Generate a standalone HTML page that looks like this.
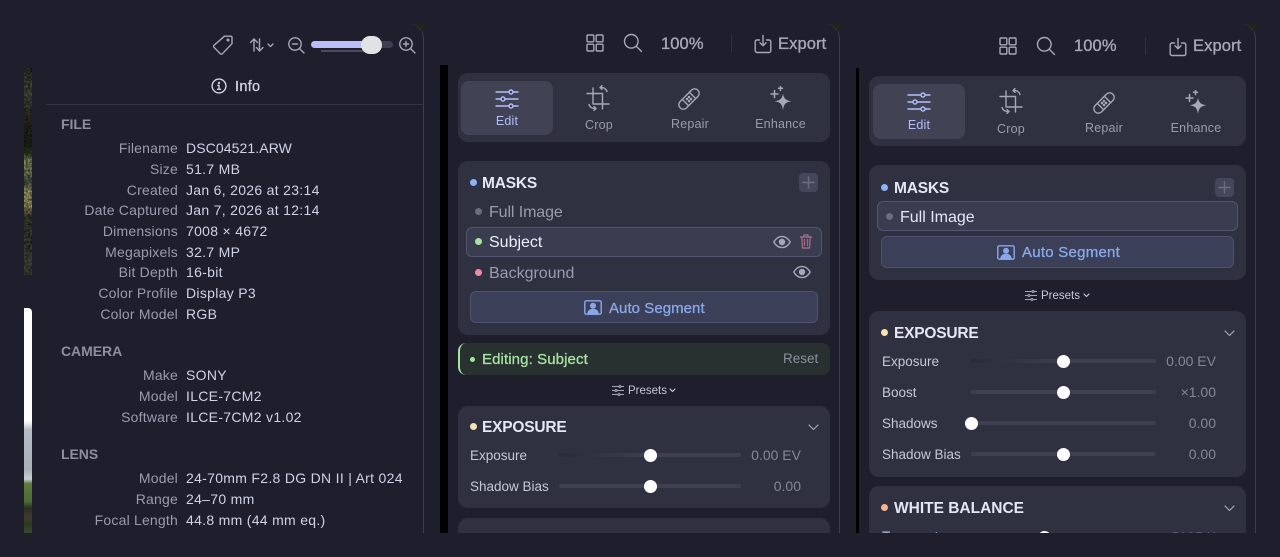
<!DOCTYPE html>
<html><head><meta charset="utf-8">
<style>
html,body{margin:0;padding:0;background:#1e1e2d;width:1280px;height:557px;overflow:hidden}
body{position:relative;font-family:"Liberation Sans",sans-serif;color:#cdd6f4}
div,span,svg{position:absolute}
.clip{left:0;top:0;width:1280px;height:533px;overflow:hidden}
.t{white-space:nowrap;line-height:20px}
.l{width:170px;left:8px;text-align:right;font-size:14px;color:#9a9cad;letter-spacing:.2px}
.v{left:186px;font-size:14px;color:#cfd3e6;letter-spacing:.3px}
.h{left:61px;font-size:14px;font-weight:bold;color:#8d8e9f;letter-spacing:-.05px}
.p{background:#2f3040;border-radius:10px}
.hd{font-size:15.5px;font-weight:bold;letter-spacing:-.2px;color:#e4e7f4}
.dot{border-radius:50%}
.tr{height:4px;background:#3e3f50;border-radius:2px}
.th{width:13px;height:13px;background:#fff;border-radius:50%}
.sl{font-size:13.5px;color:#c4c8da}
.sv{font-size:14px;color:#85869a;text-align:right;width:90px}
.tab{font-size:12.5px;color:#9a9cad;text-align:center;letter-spacing:.2px}
.top{font-size:16.5px;color:#a6a8b8;letter-spacing:.1px;-webkit-text-stroke:.35px #a6a8b8}
svg{fill:none;stroke:#a6a8b8;stroke-width:1.4;stroke-linecap:round;stroke-linejoin:round}
</style></head><body>
<div class="clip">

<!-- window edges -->
<div style="left:410px;top:24px;width:14px;height:14px;background:#23241a"></div>
<div style="left:826px;top:24px;width:14px;height:14px;background:#23241a"></div>
<div style="left:1240px;top:24px;width:16px;height:16px;background:#23241a"></div>
<div style="left:0;top:24px;width:423px;height:520px;background:#1e1e2d;border-right:1px solid #3c3d4d;border-top-right-radius:15px;box-sizing:content-box"></div>
<div style="left:424px;top:24px;width:415px;height:520px;background:#1e1e2d;border-right:1px solid #3c3d4d;border-top-right-radius:15px"></div>
<div style="left:840px;top:24px;width:415px;height:520px;background:#1e1e2d;border-right:1px solid #3c3d4d;border-top-right-radius:15px"></div>

<!-- photo strips -->
<div style="left:24px;top:68px;width:8px;height:207px;background:linear-gradient(180deg,#2b3022 0,#4a5040 12%,#2c2a24 25%,#1c1f18 36%,#2b3a22 41%,#8b9060 45%,#80885c 50%,#4d5c48 54%,#5d6648 56%,#a9a66f 60%,#95935f 67%,#3a3e32 72%,#383d32 85%,#464c3c 95%,#3a3e32 100%)"></div>
<div style="left:24px;top:308px;width:8px;height:225px;border-top-right-radius:4px;background:linear-gradient(180deg,#fff 0,#fff 50%,#dfe2e6 52%,#b4bcc4 54%,#a9b2b8 72%,#c9d0d2 76%,#5f7c3e 78%,#4c6a32 86%,#2c2e24 89%,#403a30 93%,#2a3a20 96%,#374a2c 100%)"></div>
<svg style="left:24px;top:68px;stroke:none" width="8" height="207"><defs><filter id="n" x="0" y="0" width="100%" height="100%"><feTurbulence type="fractalNoise" baseFrequency=".45" numOctaves="2" seed="4"/><feColorMatrix values="0 0 0 0 0 0 0 0 0 0 0 0 0 0 0 1.300 0 0 0 -.35"/></filter></defs><rect width="8" height="207" fill="#000" filter="url(#n)"/></svg>

<!-- black bars -->
<div style="left:440px;top:65px;width:8px;height:470px;background:#000"></div>
<div style="left:856px;top:68px;width:3px;height:470px;background:#000"></div>

<!-- ===== WINDOW 1 ===== -->
<svg style="left:211px;top:33px" width="24" height="24" viewBox="0 0 24 24"><path d="M13.5 3.2h6.3a1.2 1.2 0 0 1 1.2 1.2v6.3L11.3 20.8a1.4 1.4 0 0 1-2 0L3 14.3a1.4 1.4 0 0 1 0-2z"/><circle cx="17" cy="7" r=".8" fill="#a6a8b8"/></svg>
<svg style="left:249px;top:37px" width="26" height="16" viewBox="0 0 26 16"><path d="M5 14V2M1.5 5.5 5 2l3.5 3.5M10.500 2v12M7.500 10.500 10.500 14l3.500-3.500"/><path d="M19 7l2.500 2.500L24 7" stroke-width="1.300"/></svg>
<svg style="left:287px;top:36px" width="18" height="18" viewBox="0 0 18 18"><circle cx="8" cy="8" r="6.200"/><path d="M5.500 8h5M12.500 12.500 17 17"/></svg>
<div style="left:311px;top:41px;width:82px;height:7px;background:#3d3e4f;border-radius:4px"></div>
<div style="left:311px;top:41px;width:56px;height:7px;background:#b9bdfa;border-radius:4px"></div>
<div style="left:321px;top:50px;width:55px;height:2px;background:#4a4b5b"></div>
<div style="left:361px;top:36px;width:21px;height:18px;background:#e2e2e6;border-radius:9px"></div>
<svg style="left:398px;top:36px" width="18" height="18" viewBox="0 0 18 18"><circle cx="8" cy="8" r="6.200"/><path d="M5.500 8h5M8 5.500v5M12.500 12.500 17 17"/></svg>

<svg style="left:211px;top:78px;stroke:#d0d3e4" width="16" height="16" viewBox="0 0 16 16"><circle cx="8" cy="8" r="6.900"/><path d="M6.700 7.300H8v4M6.500 11.300h3"/><circle cx="8" cy="4.900" r=".5" fill="#d0d3e4"/></svg>
<div class="t" style="left:235px;top:76.500px;font-size:14.500px;color:#cfd3e6;-webkit-text-stroke:.3px #cfd3e6;letter-spacing:.3px">Info</div>
<div style="left:46px;top:104px;width:377px;height:1px;background:#333445"></div>

<div class="t h" style="top:114px">FILE</div>
<div class="t l" style="top:138px">Filename</div><div class="t v" style="top:138px;letter-spacing:.1px">DSC04521.ARW</div>
<div class="t l" style="top:159px">Size</div><div class="t v" style="top:159px">51.7 MB</div>
<div class="t l" style="top:180px">Created</div><div class="t v" style="top:180px">Jan 6, 2026 at 23:14</div>
<div class="t l" style="top:200px">Date Captured</div><div class="t v" style="top:200px">Jan 7, 2026 at 12:14</div>
<div class="t l" style="top:221px">Dimensions</div><div class="t v" style="top:221px">7008 × 4672</div>
<div class="t l" style="top:242px">Megapixels</div><div class="t v" style="top:242px">32.7 MP</div>
<div class="t l" style="top:262px">Bit Depth</div><div class="t v" style="top:262px">16-bit</div>
<div class="t l" style="top:283px">Color Profile</div><div class="t v" style="top:283px">Display P3</div>
<div class="t l" style="top:304px">Color Model</div><div class="t v" style="top:304px">RGB</div>
<div class="t h" style="top:341px">CAMERA</div>
<div class="t l" style="top:365px">Make</div><div class="t v" style="top:365px">SONY</div>
<div class="t l" style="top:386px">Model</div><div class="t v" style="top:386px">ILCE-7CM2</div>
<div class="t l" style="top:407px">Software</div><div class="t v" style="top:407px">ILCE-7CM2 v1.02</div>
<div class="t h" style="top:444px">LENS</div>
<div class="t l" style="top:468px">Model</div><div class="t v" style="top:468px">24-70mm F2.8 DG DN II | Art 024</div>
<div class="t l" style="top:489px">Range</div><div class="t v" style="top:489px">24–70 mm</div>
<div class="t l" style="top:510px">Focal Length</div><div class="t v" style="top:510px">44.8 mm (44 mm eq.)</div>

<!-- ===== WINDOW 2 ===== -->
<svg style="left:586px;top:34px" width="18" height="18" viewBox="0 0 18 18"><rect x="1" y="1" width="6.800" height="6.800" rx="1"/><rect x="10.200" y="1" width="6.800" height="6.800" rx="1"/><rect x="1" y="10.200" width="6.800" height="6.800" rx="1"/><rect x="10.200" y="10.200" width="6.800" height="6.800" rx="1"/></svg>
<svg style="left:623px;top:33px" width="20" height="20" viewBox="0 0 20 20"><circle cx="8.300" cy="8.300" r="6.800"/><path d="M13.300 13.300 18.500 18.500"/></svg>
<div class="t top" style="left:661px;top:33.500px">100%</div>
<div style="left:731px;top:34px;width:1px;height:18px;background:#2f3040"></div>
<svg style="left:754px;top:34px" width="18" height="20" viewBox="0 0 18 20"><path d="M5.500 6H3a1.800 1.800 0 0 0-1.800 1.800v9A1.800 1.800 0 0 0 3 18.500h12a1.800 1.800 0 0 0 1.800-1.800v-9A1.800 1.800 0 0 0 15 6h-2.500M9 1.500v10M6 8.800l3 3 3-3"/></svg>
<div class="t top" style="left:778px;top:33.500px">Export</div>

<div class="p" style="left:458px;top:73px;width:372px;height:69px"></div>
<div style="left:461px;top:81px;width:92px;height:54px;background:#414253;border-radius:8px"></div>
<svg style="left:495px;top:89px;stroke:#b4befe" width="24" height="20" viewBox="0 0 24 20"><path d="M1 3h13M18 3h5M1 10h5M10 10h13M1 17h13M18 17h5"/><circle cx="16" cy="3" r="2"/><circle cx="8" cy="10" r="2"/><circle cx="16" cy="17" r="2"/></svg>
<div class="t tab" style="left:461px;top:111px;width:92px;color:#b4befe">Edit</div>
<svg style="left:586px;top:85px" width="24" height="27" viewBox="0 0 24 27"><path d="M1 8.500h15.500V24M7 3v16h16"/><path d="M14 2.500c3-.5 6 1 7 4M14 2.500l2-1.800M14 2.500l2 1.800M10 23.500c-3 .5-6-1-7-4M10 23.500l-2 1.800M10 23.500l-2-1.800"/></svg>
<div class="t tab" style="left:553px;top:115px;width:92px">Crop</div>
<svg style="left:677px;top:87px" width="24" height="24" viewBox="0 0 24 24"><g transform="rotate(-45 12 12)"><rect x="-.5" y="7.500" width="25" height="9" rx="4.500"/><path d="M7 7.500v9M17 7.500v9"/></g><circle cx="12" cy="10" r=".6" fill="#a6a8b8"/><circle cx="14" cy="12" r=".6" fill="#a6a8b8"/><circle cx="10" cy="12" r=".6" fill="#a6a8b8"/><circle cx="12" cy="14" r=".6" fill="#a6a8b8"/></svg>
<div class="t tab" style="left:644px;top:114px;width:92px">Repair</div>
<svg style="left:769px;top:86px;stroke:none" width="24" height="26" viewBox="0 0 24 26"><path d="M14 7.500c.8 5 2.500 6.800 8.500 7.800-6 1-7.700 2.800-8.500 9-.8-6.200-2.500-8-8.500-9 6-1 7.700-2.800 8.500-7.800z" fill="#a6a8b8"/><path d="M5.500 4.500v7M2 8h7M11.500 0v4.500M9.500 2.200h4" stroke="#a6a8b8" stroke-width="1.500"/></svg>
<div class="t tab" style="left:735px;top:114px;width:91px">Enhance</div>

<div class="p" style="left:458px;top:161px;width:372px;height:174px"></div>
<div class="dot" style="left:470px;top:179px;width:7px;height:7px;background:#89b4fa"></div>
<div class="t hd" style="left:482px;top:174px">MASKS</div>
<div style="left:799px;top:173px;width:19px;height:19px;background:#45465a;border-radius:4px"></div>
<svg style="left:802px;top:176px;stroke:#6b6d80" width="13" height="13" viewBox="0 0 13 13"><path d="M6.500 1v11M1 6.500h11"/></svg>
<div class="dot" style="left:475px;top:208px;width:7px;height:7px;background:#6c6e80"></div>
<div class="t" style="left:489px;top:203px;font-size:16px;color:#9a9cad;letter-spacing:-.1px">Full Image</div>
<div style="left:466px;top:227px;width:356px;height:30px;box-sizing:border-box;background:#3a3c50;border:1px solid #525672;border-radius:6px"></div>
<div class="dot" style="left:475px;top:238px;width:7px;height:7px;background:#a6e3a1"></div>
<div class="t" style="left:489px;top:233px;font-size:16px;color:#eef0fa">Subject</div>
<svg style="left:773px;top:235px;stroke:#a6a8b8" width="18" height="14" viewBox="0 0 18 14"><path d="M.8 7C3 3.200 5.800 1.400 9 1.400s6 1.800 8.200 5.600C15 10.800 12.200 12.600 9 12.600S3 10.800.8 7z"/><circle cx="9" cy="7" r="2.500" fill="#a6a8b8"/></svg>
<svg style="left:800px;top:234px;stroke:#9c6a80" width="12" height="15" viewBox="0 0 12 15"><path d="M.5 3h11M4 3V1h4v2M1.800 3l.7 11h7l.7-11M4.500 5.500v6M7.500 5.500v6"/></svg>
<div class="dot" style="left:475px;top:269px;width:7px;height:7px;background:#eb8ba5"></div>
<div class="t" style="left:489px;top:264px;font-size:16px;color:#9a9cad">Background</div>
<svg style="left:793px;top:265px;stroke:#a6a8b8" width="18" height="14" viewBox="0 0 18 14"><path d="M.8 7C3 3.200 5.800 1.400 9 1.400s6 1.800 8.200 5.600C15 10.800 12.200 12.600 9 12.600S3 10.800.8 7z"/><circle cx="9" cy="7" r="2.500" fill="#a6a8b8"/></svg>
<div style="left:470px;top:291px;width:348px;height:32px;box-sizing:border-box;background:#3b3f57;border:1px solid #4d5272;border-radius:6px"></div>
<svg style="left:584px;top:300px;stroke:#89a8ea" width="18" height="15" viewBox="0 0 18 15"><rect x=".8" y=".8" width="16.400" height="13.400" rx="1.500"/><circle cx="9" cy="5.800" r="2.300" fill="#89a8ea"/><path d="M3.800 14c.4-3.500 2.600-4.500 5.200-4.500s4.800 1 5.200 4.500z" fill="#89a8ea"/></svg>
<div class="t" style="left:609px;top:298.500px;font-size:15px;color:#89a8ea;-webkit-text-stroke:.3px #89a8ea;letter-spacing:.05px">Auto Segment</div>

<div style="left:458px;top:343px;width:372px;height:32px;box-sizing:border-box;background:#293030;border-left:2px solid #a6e3a1;border-radius:8px"></div>
<div class="dot" style="left:470px;top:357px;width:5px;height:5px;background:#a6e3a1"></div>
<div class="t" style="left:482px;top:349.500px;font-size:15px;color:#a6e3a1;-webkit-text-stroke:.3px #a6e3a1;letter-spacing:.1px">Editing: Subject</div>
<div class="t" style="left:783px;top:349px;font-size:13.500px;color:#8d8e9f">Reset</div>

<svg style="left:612px;top:385px;stroke:#a6a8b8;stroke-width:1" width="12" height="11" viewBox="0 0 12 11"><path d="M0 1.500h12M0 5.500h12M0 9.500h12"/><circle cx="8" cy="1.500" r="1" fill="#1e1e2d"/><circle cx="4" cy="5.500" r="1" fill="#1e1e2d"/><circle cx="7" cy="9.500" r="1" fill="#1e1e2d"/></svg>
<div class="t" style="left:628px;top:381px;font-size:11.500px;color:#c4c8da">Presets</div>
<svg style="left:669px;top:388px;stroke:#c4c8da;stroke-width:1.200" width="7" height="5" viewBox="0 0 7 5"><path d="M1 1l2.500 2.500L6 1"/></svg>

<div class="p" style="left:458px;top:406px;width:372px;height:102px"></div>
<div class="dot" style="left:470px;top:423px;width:7px;height:7px;background:#f9e2af"></div>
<div class="t hd" style="left:482px;top:418px">EXPOSURE</div>
<svg style="left:808px;top:424px;stroke:#a6a8b8;stroke-width:1.200" width="11" height="7" viewBox="0 0 11 7"><path d="M1 1l4.500 4.500L10 1"/></svg>
<div class="t sl" style="left:470px;top:446px">Exposure</div>
<div class="tr" style="left:559px;top:453px;width:182px;background:linear-gradient(90deg,#2a2b38,#3e3f50 50%)"></div>
<div class="th" style="left:644px;top:449px"></div>
<div class="t sv" style="left:711px;top:445px">0.00 EV</div>
<div class="t sl" style="left:470px;top:477px">Shadow Bias</div>
<div class="tr" style="left:559px;top:484px;width:182px"></div>
<div class="th" style="left:644px;top:480px"></div>
<div class="t sv" style="left:711px;top:476px">0.00</div>
<div class="p" style="left:458px;top:518px;width:372px;height:40px"></div>
<div class="t hd" style="left:482px;top:530px;color:#8d8e9f">WHITE BALANCE</div>

<!-- ===== WINDOW 3 ===== -->
<svg style="left:999px;top:37px" width="18" height="18" viewBox="0 0 18 18"><rect x="1" y="1" width="6.800" height="6.800" rx="1"/><rect x="10.200" y="1" width="6.800" height="6.800" rx="1"/><rect x="1" y="10.200" width="6.800" height="6.800" rx="1"/><rect x="10.200" y="10.200" width="6.800" height="6.800" rx="1"/></svg>
<svg style="left:1036px;top:36px" width="20" height="20" viewBox="0 0 20 20"><circle cx="8.300" cy="8.300" r="6.800"/><path d="M13.300 13.300 18.500 18.500"/></svg>
<div class="t top" style="left:1074px;top:36px">100%</div>
<div style="left:1145px;top:37px;width:1px;height:18px;background:#2f3040"></div>
<svg style="left:1169px;top:37px" width="18" height="20" viewBox="0 0 18 20"><path d="M5.500 6H3a1.800 1.800 0 0 0-1.800 1.800v9A1.800 1.800 0 0 0 3 18.500h12a1.800 1.800 0 0 0 1.800-1.800v-9A1.800 1.800 0 0 0 15 6h-2.500M9 1.500v10M6 8.800l3 3 3-3"/></svg>
<div class="t top" style="left:1193px;top:36px">Export</div>

<div class="p" style="left:869px;top:76px;width:377px;height:70px"></div>
<div style="left:873px;top:84px;width:92px;height:55px;background:#414253;border-radius:8px"></div>
<svg style="left:907px;top:92px;stroke:#b4befe" width="24" height="20" viewBox="0 0 24 20"><path d="M1 3h13M18 3h5M1 10h5M10 10h13M1 17h13M18 17h5"/><circle cx="16" cy="3" r="2"/><circle cx="8" cy="10" r="2"/><circle cx="16" cy="17" r="2"/></svg>
<div class="t tab" style="left:873px;top:115px;width:92px;color:#b4befe">Edit</div>
<svg style="left:999px;top:88px" width="24" height="27" viewBox="0 0 24 27"><path d="M1 8.500h15.500V24M7 3v16h16"/><path d="M14 2.500c3-.5 6 1 7 4M14 2.500l2-1.800M14 2.500l2 1.800M10 23.500c-3 .5-6-1-7-4M10 23.500l-2 1.800M10 23.500l-2-1.800"/></svg>
<div class="t tab" style="left:965px;top:118.500px;width:92px">Crop</div>
<svg style="left:1092px;top:91px" width="24" height="24" viewBox="0 0 24 24"><g transform="rotate(-45 12 12)"><rect x="-.5" y="7.500" width="25" height="9" rx="4.500"/><path d="M7 7.500v9M17 7.500v9"/></g><circle cx="12" cy="10" r=".6" fill="#a6a8b8"/><circle cx="14" cy="12" r=".6" fill="#a6a8b8"/><circle cx="10" cy="12" r=".6" fill="#a6a8b8"/><circle cx="12" cy="14" r=".6" fill="#a6a8b8"/></svg>
<div class="t tab" style="left:1058px;top:117.500px;width:92px">Repair</div>
<svg style="left:1184px;top:90px;stroke:none" width="24" height="26" viewBox="0 0 24 26"><path d="M14 7.500c.8 5 2.500 6.800 8.500 7.800-6 1-7.700 2.800-8.500 9-.8-6.200-2.500-8-8.500-9 6-1 7.700-2.800 8.500-7.800z" fill="#a6a8b8"/><path d="M5.500 4.500v7M2 8h7M11.500 0v4.500M9.500 2.200h4" stroke="#a6a8b8" stroke-width="1.500"/></svg>
<div class="t tab" style="left:1150px;top:118px;width:92px">Enhance</div>

<div class="p" style="left:869px;top:165px;width:377px;height:115px"></div>
<div class="dot" style="left:881px;top:184px;width:7px;height:7px;background:#89b4fa"></div>
<div class="t hd" style="left:894px;top:178.500px">MASKS</div>
<div style="left:1215px;top:178px;width:19px;height:19px;background:#45465a;border-radius:4px"></div>
<svg style="left:1218px;top:181px;stroke:#6b6d80" width="13" height="13" viewBox="0 0 13 13"><path d="M6.500 1v11M1 6.500h11"/></svg>
<div style="left:877px;top:201px;width:361px;height:30px;box-sizing:border-box;background:#3a3c50;border:1px solid #525672;border-radius:6px"></div>
<div class="dot" style="left:886px;top:213px;width:7px;height:7px;background:#6c6e80"></div>
<div class="t" style="left:900px;top:207.500px;font-size:16px;color:#e4e7f4">Full Image</div>
<div style="left:881px;top:236px;width:353px;height:32px;box-sizing:border-box;background:#3b3f57;border:1px solid #4d5272;border-radius:6px"></div>
<svg style="left:997px;top:245px;stroke:#89a8ea" width="18" height="15" viewBox="0 0 18 15"><rect x=".8" y=".8" width="16.400" height="13.400" rx="1.500"/><circle cx="9" cy="5.800" r="2.300" fill="#89a8ea"/><path d="M3.800 14c.4-3.500 2.600-4.500 5.200-4.500s4.800 1 5.200 4.500z" fill="#89a8ea"/></svg>
<div class="t" style="left:1022px;top:243px;font-size:15px;color:#89a8ea;-webkit-text-stroke:.3px #89a8ea;letter-spacing:.25px">Auto Segment</div>

<svg style="left:1025px;top:290px;stroke:#a6a8b8;stroke-width:1" width="12" height="11" viewBox="0 0 12 11"><path d="M0 1.500h12M0 5.500h12M0 9.500h12"/><circle cx="8" cy="1.500" r="1" fill="#1e1e2d"/><circle cx="4" cy="5.500" r="1" fill="#1e1e2d"/><circle cx="7" cy="9.500" r="1" fill="#1e1e2d"/></svg>
<div class="t" style="left:1041px;top:286px;font-size:11.500px;color:#c4c8da">Presets</div>
<svg style="left:1083px;top:293px;stroke:#c4c8da;stroke-width:1.200" width="7" height="5" viewBox="0 0 7 5"><path d="M1 1l2.500 2.500L6 1"/></svg>

<div class="p" style="left:869px;top:311px;width:377px;height:166px"></div>
<div class="dot" style="left:881px;top:329px;width:7px;height:7px;background:#f9e2af"></div>
<div class="t hd" style="left:894px;top:324px">EXPOSURE</div>
<svg style="left:1224px;top:330px;stroke:#a6a8b8;stroke-width:1.200" width="11" height="7" viewBox="0 0 11 7"><path d="M1 1l4.500 4.500L10 1"/></svg>
<div class="t sl" style="left:882px;top:352px">Exposure</div>
<div class="tr" style="left:971px;top:359px;width:185px;background:linear-gradient(90deg,#2a2b38,#3e3f50 50%)"></div>
<div class="th" style="left:1057px;top:355px"></div>
<div class="t sv" style="left:1126px;top:351px">0.00 EV</div>
<div class="t sl" style="left:882px;top:383px">Boost</div>
<div class="tr" style="left:971px;top:390px;width:185px"></div>
<div class="th" style="left:1057px;top:386px"></div>
<div class="t sv" style="left:1126px;top:382px">×1.00</div>
<div class="t sl" style="left:882px;top:414px">Shadows</div>
<div class="tr" style="left:971px;top:421px;width:185px"></div>
<div class="th" style="left:965px;top:417px"></div>
<div class="t sv" style="left:1126px;top:413px">0.00</div>
<div class="t sl" style="left:882px;top:445px">Shadow Bias</div>
<div class="tr" style="left:971px;top:452px;width:185px"></div>
<div class="th" style="left:1057px;top:448px"></div>
<div class="t sv" style="left:1126px;top:444px">0.00</div>

<div class="p" style="left:869px;top:486px;width:377px;height:70px"></div>
<div class="dot" style="left:881px;top:504px;width:7px;height:7px;background:#fab387"></div>
<div class="t hd" style="left:894px;top:499px;letter-spacing:0">WHITE BALANCE</div>
<svg style="left:1224px;top:505px;stroke:#a6a8b8;stroke-width:1.200" width="11" height="7" viewBox="0 0 11 7"><path d="M1 1l4.500 4.500L10 1"/></svg>
<div class="t sl" style="left:882px;top:527px">Temperature</div>
<div class="th" style="left:1038px;top:531px"></div>
<div class="t sv" style="left:1126px;top:527px">5105 K</div>
</div>
</body></html>
